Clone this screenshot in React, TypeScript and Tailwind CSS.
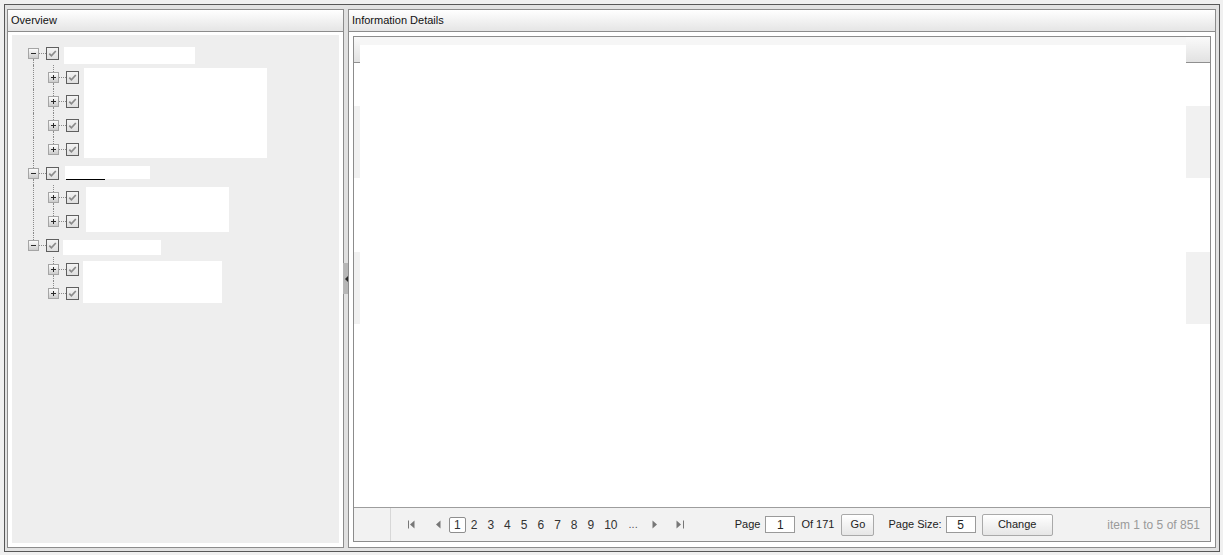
import React from 'react';

// Tree widgets ---------------------------------------------------------------

function Expander({ open }: { open: boolean }) {
  return (
    <svg width="11" height="11" viewBox="0 0 11 11" className="block shrink-0">
      <defs>
        <linearGradient id="expander-fill" x1="0" y1="0" x2="0" y2="1">
          <stop offset="0" stopColor="#ffffff" />
          <stop offset="1" stopColor="#c9c9c9" />
        </linearGradient>
      </defs>
      <rect x="0.5" y="0.5" width="10" height="10" fill="url(#expander-fill)" stroke="#a5a5a5" />
      <path d="M3 5.5h5" stroke="#2a2a2a" />
      {!open && <path d="M5.5 3v5" stroke="#2a2a2a" />}
    </svg>
  );
}

function CheckBox() {
  return (
    <svg width="13" height="13" viewBox="0 0 13 13" className="block shrink-0">
      <defs>
        <linearGradient id="check-fill" x1="0" y1="0" x2="0" y2="1">
          <stop offset="0" stopColor="#f4f4f4" />
          <stop offset="1" stopColor="#dedede" />
        </linearGradient>
      </defs>
      <rect x="0.5" y="0.5" width="12" height="12" fill="url(#check-fill)" stroke="#5f5f5f" />
      <path d="M3.3 6.6l2.1 2.2L9.8 4" stroke="#8a8a8a" strokeWidth="1.7" fill="none" />
    </svg>
  );
}

interface TreeRowProps {
  open?: boolean;
  above?: boolean;
  below?: boolean;
  guide?: boolean;
  nested?: boolean;
  children?: React.ReactNode;
}

function TreeRow({ open = false, above, below, guide, nested, children }: TreeRowProps) {
  return (
    <div className="flex h-[24px] items-center">
      {nested && (
        <>
          <div className="flex h-full w-[11px] shrink-0">
            {guide && <div className="h-full w-[6px] border-r border-dotted border-[#8a8a8a]" />}
          </div>
          <div className="w-[9px] shrink-0" />
        </>
      )}
      <div className="flex h-full w-[11px] shrink-0 flex-col">
        <div className={`w-[6px] flex-1 ${above ? 'border-r border-dotted border-[#8a8a8a]' : ''}`} />
        <Expander open={open} />
        <div className={`w-[6px] flex-1 ${below ? 'border-r border-dotted border-[#8a8a8a]' : ''}`} />
      </div>
      <div className="w-[7px] shrink-0 border-t border-dotted border-[#8a8a8a]" />
      <CheckBox />
      {children}
    </div>
  );
}

function Branch({ count, guide, blockClass }: { count: number; guide: boolean; blockClass: string }) {
  return (
    <div className="flex items-start">
      <div className="flex flex-col">
        {Array.from({ length: count }).map((_, i) => (
          <TreeRow key={i} nested guide={guide} above below={i < count - 1} />
        ))}
      </div>
      <div className={`bg-white ${blockClass}`} />
    </div>
  );
}

function Overview() {
  return (
    <div className="flex flex-col pl-[16px] pt-[6px]">
      <TreeRow open below>
        <div className="ml-[5px] mt-[6px] h-[17px] w-[131px] self-start bg-white" />
      </TreeRow>
      <Branch count={4} guide blockClass="ml-[5px] mt-[3px] h-[90px] w-[183px]" />

      <TreeRow open above below>
        <div className="ml-[6px] mt-[5px] flex w-[85px] flex-col self-start">
          <div className="h-[13px] bg-white" />
          <div className="ml-[1px] h-px w-[39px] bg-black" />
        </div>
      </TreeRow>
      <Branch count={2} guide blockClass="ml-[7px] mt-[2px] h-[45px] w-[143px]" />

      <TreeRow open above>
        <div className="ml-[4px] mt-[7px] h-[15px] w-[98px] self-start bg-white" />
      </TreeRow>
      <Branch count={2} guide={false} blockClass="ml-[4px] mt-[4px] h-[42px] w-[139px]" />
    </div>
  );
}

// Pager ----------------------------------------------------------------------

function PagerArrow({ dir, edge }: { dir: 'left' | 'right'; edge?: boolean }) {
  if (dir === 'left') {
    return (
      <svg width={edge ? 7 : 5} height="9" viewBox={edge ? '0 0 7 9' : '0 0 5 9'} className="block shrink-0">
        {edge && <rect x="0" y="0.5" width="1" height="8" fill="#777777" />}
        <path d={edge ? 'M6.5 0.5v8L2 4.5z' : 'M4.5 0.5v8L0 4.5z'} fill="#777777" />
      </svg>
    );
  }
  return (
    <svg width={edge ? 8 : 5} height="9" viewBox={edge ? '0 0 8 9' : '0 0 5 9'} className="block shrink-0">
      <path d="M0.5 0.5v8L5 4.5z" fill="#777777" />
      {edge && <rect x="7" y="0.5" width="1" height="8" fill="#777777" />}
    </svg>
  );
}

function PagerButton({ label, className }: { label: string; className: string }) {
  return (
    <button
      className={`flex h-[22px] items-center justify-center rounded-[2px] border border-[#a9a9a9] bg-linear-to-b from-white to-[#e6e6e6] text-[11px] text-[#222] ${className}`}
    >
      {label}
    </button>
  );
}

function Pager() {
  const pages = [1, 2, 3, 4, 5, 6, 7, 8, 9, 10];
  return (
    <div className="flex h-[34px] shrink-0 items-center border-t border-[#9d9d9d] bg-[#f2f2f2] text-[11px] text-[#222]">
      <div className="h-full w-[37px] shrink-0 border-r border-[#d7d7d7]" />
      <div className="ml-[17px]">
        <PagerArrow dir="left" edge />
      </div>
      <div className="ml-[21px]">
        <PagerArrow dir="left" />
      </div>
      <div className="ml-[8px] flex items-center text-[12px] text-[#333]">
        {pages.map((p) => (
          <span
            key={p}
            className={`flex h-[16px] items-center justify-center rounded-[2px] border px-[4px] ${
              p === 1 ? 'border-[#8e8e8e] bg-white' : 'border-transparent'
            }`}
          >
            {p}
          </span>
        ))}
        <span className="ml-[6px] text-[11px] text-[#555]">...</span>
      </div>
      <div className="ml-[14px]">
        <PagerArrow dir="right" />
      </div>
      <div className="ml-[19px]">
        <PagerArrow dir="right" edge />
      </div>

      <span className="ml-[51px]">Page</span>
      <div className="ml-[5px] flex h-[17px] w-[30px] items-center justify-center border border-[#9a9a9a] bg-white text-[12px]">
        1
      </div>
      <span className="ml-[6px]">Of 171</span>
      <PagerButton label="Go" className="ml-[7px] w-[33px]" />
      <span className="ml-[14px]">Page Size:</span>
      <div className="ml-[4px] flex h-[17px] w-[30px] items-center justify-center border border-[#9a9a9a] bg-white text-[12px]">
        5
      </div>
      <PagerButton label="Change" className="ml-[6px] w-[71px]" />
      <span className="ml-auto pr-[10px] text-[12px] text-[#9a9a9a]">item 1 to 5 of 851</span>
    </div>
  );
}

// Grid -----------------------------------------------------------------------

function SideColumn() {
  return (
    <div className="flex h-full flex-col">
      <div className="h-[26px] shrink-0 border-b border-[#8f8f8f] bg-linear-to-b from-[#fafafa] to-[#e2e2e2]" />
      <div className="h-[43px] shrink-0" />
      <div className="h-[72px] shrink-0 bg-[#f1f1f1]" />
      <div className="h-[74px] shrink-0" />
      <div className="h-[72px] shrink-0 bg-[#f1f1f1]" />
      <div className="flex-1" />
    </div>
  );
}

function DetailsGrid() {
  return (
    <div className="flex h-full flex-col border border-[#8c8c8c] bg-white">
      <div className="flex min-h-0 flex-1">
        <div className="w-[6px] shrink-0">
          <SideColumn />
        </div>
        <div className="flex flex-1 flex-col">
          <div className="h-[8px] shrink-0 bg-[#f6f6f6]" />
          <div className="flex-1 bg-white" />
        </div>
        <div className="w-[24px] shrink-0">
          <SideColumn />
        </div>
      </div>
      <Pager />
    </div>
  );
}

// Panels ---------------------------------------------------------------------

function PanelHeader({ title }: { title: string }) {
  return (
    <div className="flex h-[22px] shrink-0 items-center border-b border-[#8c8c8c] bg-linear-to-b from-white to-[#e5e5e5] pl-[3px] text-[11px] text-[#111]">
      {title}
    </div>
  );
}

export default function App() {
  return (
    <div className="h-[555px] w-[1223px] bg-[#f0f0f0] pl-[4px] pt-[4px] font-['Liberation_Sans',Arial,sans-serif]">
      <div className="flex h-[548px] w-[1216px] border border-[#575757] bg-[#e2e2e2] pb-[3px] pl-[2px] pr-[3px] pt-[4px]">
        <section className="flex w-[337px] shrink-0 flex-col border border-[#8c8c8c] bg-white">
          <PanelHeader title="Overview" />
          <div className="flex-1 px-[4px] pb-[4px] pt-[3px]">
            <div className="h-full bg-[#eeeeee]">
              <Overview />
            </div>
          </div>
        </section>

        <div className="flex w-[4px] shrink-0 items-center justify-center bg-[#e0e0e0]">
          <div className="-mx-[1px] flex h-[31px] w-[6px] shrink-0 items-center justify-center bg-[#b7b7b7]">
            <svg width="3" height="6" viewBox="0 0 3 6" className="block">
              <path d="M3 0v6L0 3z" fill="#2b2b2b" />
            </svg>
          </div>
        </div>

        <section className="flex min-w-0 flex-1 flex-col border border-[#8c8c8c] bg-white">
          <PanelHeader title="Information Details" />
          <div className="min-h-0 flex-1 px-[4px] pb-[5px] pt-[4px]">
            <DetailsGrid />
          </div>
        </section>
      </div>
    </div>
  );
}
